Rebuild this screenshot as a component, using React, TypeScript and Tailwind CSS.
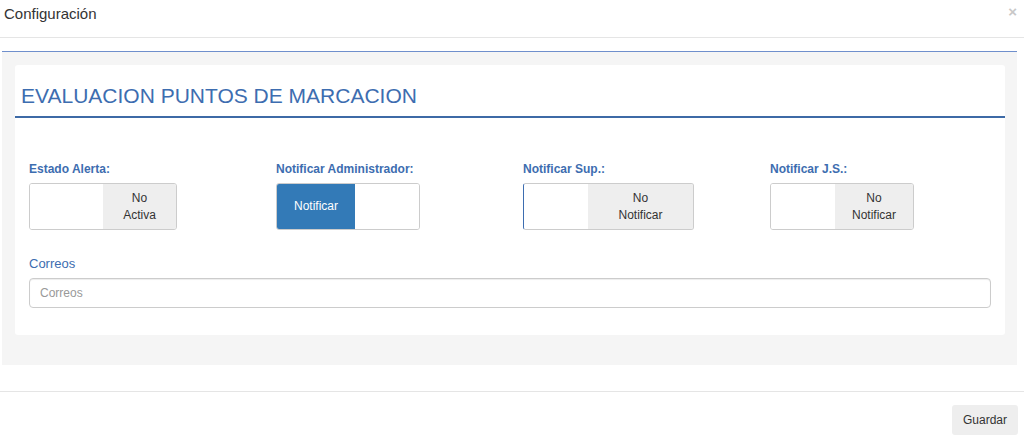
import React from "react";

type SwitchProps = {
  label: string;
  on: boolean;
  leftW: number;
  rightW: number;
  onText?: string;
  offText: React.ReactNode;
  focused?: boolean;
};

const switches: SwitchProps[] = [
  { label: "Estado Alerta:", on: false, leftW: 73, rightW: 73, offText: <>No<br />Activa</> },
  { label: "Notificar Administrador:", on: true, leftW: 78, rightW: 64, onText: "Notificar", offText: "" },
  { label: "Notificar Sup.:", on: false, leftW: 64, rightW: 105, offText: <>No<br />Notificar</>, focused: true },
  { label: "Notificar J.S.:", on: false, leftW: 64, rightW: 78, offText: <>No<br />Notificar</> },
];

function Toggle({ label, on, leftW, rightW, onText, offText, focused }: SwitchProps) {
  return (
    <div className="flex flex-col">
      <label className="h-[17px] text-[12px] font-bold leading-[17px] text-[#3d6db0]">{label}</label>
      <div
        className={`mt-[5px] flex h-[47px] w-fit overflow-hidden rounded-[3px] border border-[#ccc] bg-white ${
          focused ? "border-l-[#3d6db0]" : ""
        }`}
      >
        {on ? (
          <>
            <div
              className="flex items-center justify-center bg-[#337ab7] text-[12px] leading-[17px] text-white"
              style={{ width: leftW }}
            >
              {onText}
            </div>
            <div className="bg-white" style={{ width: rightW }} />
          </>
        ) : (
          <>
            <div className="bg-white" style={{ width: leftW }} />
            <div
              className="flex items-center justify-center bg-[#eee] text-center text-[12px] leading-[17px] text-[#333]"
              style={{ width: rightW }}
            >
              <span>{offText}</span>
            </div>
          </>
        )}
      </div>
    </div>
  );
}

export default function App() {
  return (
    <div className="h-[443px] w-[1024px] bg-white font-['Liberation_Sans',Arial,sans-serif] text-[#333]">
      {/* Modal header */}
      <div className="relative h-[38px] border-b border-[#e5e5e5] pl-[4px] pt-[5px]">
        <h4 className="text-[15px] leading-[18px] text-[#333]">Configuración</h4>
        <button className="absolute right-[7px] top-[1px] text-[15px] font-bold text-[#c8c8c8]">×</button>
      </div>

      {/* Modal body */}
      <div className="pl-[2px] pr-[7px] pt-[13px]">
        <div className="border-t border-[#6f8fcc] bg-[#f5f5f5] pb-[30px] pl-[13px] pr-[12px] pt-[13px]">
          <div className="rounded-[3px] bg-white pb-[27px]">
            <div className="border-b-2 border-[#3d6aa6] px-[6px] pb-[7px] pt-[17px]">
              <h2 className="text-[21px] leading-[27px] text-[#3d6db0]">EVALUACION PUNTOS DE MARCACION</h2>
            </div>

            <div className="grid grid-cols-[247px_247px_247px_247px] px-[14px] pt-[43px]">
              {switches.map((s) => (
                <Toggle key={s.label} {...s} />
              ))}
            </div>

            <div className="px-[14px] pt-[25px]">
              <label className="block text-[13px] leading-[17px] text-[#3d6db0]">Correos</label>
              <input
                placeholder="Correos"
                className="mt-[6px] h-[30px] w-full rounded-[4px] border border-[#ccc] px-[10px] text-[12px] shadow-[inset_0_1px_1px_rgba(0,0,0,0.075)] outline-none placeholder:text-[#999]"
              />
            </div>
          </div>
        </div>
      </div>

      {/* Modal footer */}
      <div className="mt-[26px] flex justify-end border-t border-[#e5e5e5] pr-[6px] pt-[13px]">
        <button className="h-[30px] w-[66px] rounded-[3px] bg-[#eee] text-[12px] text-[#333]">Guardar</button>
      </div>
    </div>
  );
}
